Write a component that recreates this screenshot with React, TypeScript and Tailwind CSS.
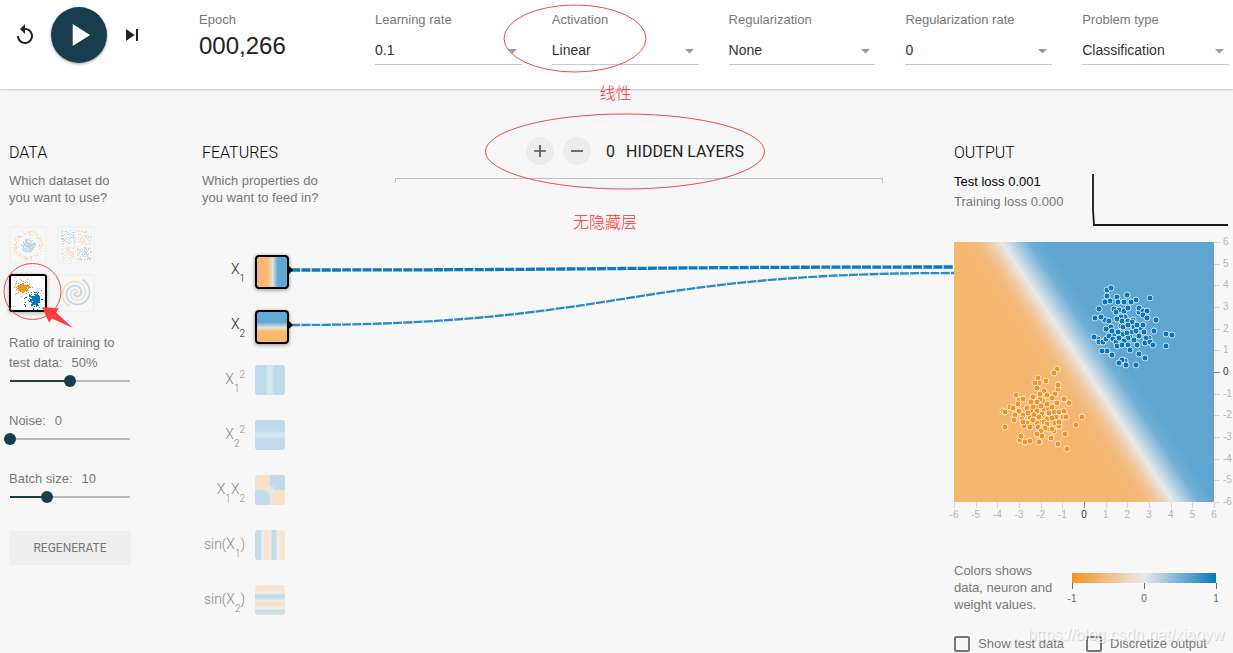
import { useState } from 'react';
import type { ReactNode } from 'react';

type Point = [number, number];

const BLUE = '#0877bd';
const ORANGE = '#f59322';

const bluePoints: Point[] = [
  [176, 95], [169, 92], [185, 94], [160, 92], [178, 90], [187, 86], [171, 75], [167, 84],
  [153, 48], [157, 46], [156, 59], [153, 54], [151, 60], [163, 55], [173, 53], [182, 58], [196, 56],
  [164, 60], [170, 60], [177, 60], [145, 67], [141, 76], [151, 78], [147, 75], [155, 79],
  [160, 67], [165, 68], [170, 69], [162, 70], [174, 66], [185, 70], [185, 66], [189, 69], [193, 69],
  [189, 73], [193, 76], [202, 78], [167, 75], [163, 77], [168, 79], [174, 79], [179, 78], [178, 80],
  [157, 85], [152, 87], [158, 89], [164, 90], [169, 85], [174, 83], [180, 85], [183, 83], [189, 83],
  [190, 90], [182, 89], [173, 91], [200, 89], [212, 92], [218, 93], [212, 104], [144, 97], [140, 95],
  [145, 100], [149, 100], [152, 97], [155, 94], [159, 97], [162, 100], [165, 96], [174, 96], [170, 99],
  [180, 98], [195, 96], [192, 96], [191, 101], [196, 100], [199, 103], [163, 104], [168, 103],
  [174, 103], [183, 103], [176, 108], [153, 109], [148, 109], [158, 113], [185, 112], [191, 116],
  [171, 119], [168, 118], [165, 121], [172, 123], [182, 123],
];

const orangePoints: Point[] = [
  [89, 159], [90, 167], [94, 166], [88, 172], [91, 176], [77, 169], [76, 175], [83, 165], [100, 170],
  [102, 175], [87, 180], [83, 181], [95, 187], [73, 181], [101, 181], [86, 157], [79, 165], [93, 177],
  [103, 127], [100, 131], [84, 136], [85, 141], [81, 141], [92, 139], [104, 147], [104, 143],
  [83, 146], [90, 149], [62, 153], [65, 158], [69, 157], [64, 162], [86, 152], [79, 155], [93, 153],
  [101, 152], [98, 156], [110, 157], [115, 161], [103, 161], [93, 162], [77, 160], [83, 160],
  [87, 164], [98, 165], [56, 165], [59, 166], [49, 169], [51, 170], [65, 169], [73, 166], [61, 173],
  [60, 178], [51, 185], [69, 173], [74, 171], [83, 169], [80, 173], [85, 175], [79, 178], [68, 177],
  [70, 184], [69, 180], [76, 185], [90, 180], [93, 182], [84, 185], [95, 171], [98, 176], [105, 170],
  [110, 169], [109, 175], [112, 175], [105, 184], [105, 180], [128, 175], [122, 183], [111, 192],
  [91, 186], [87, 189], [100, 189], [98, 187], [83, 192], [88, 194], [97, 196], [66, 198], [67, 194],
  [71, 200], [76, 199], [85, 200], [104, 202], [113, 207],
];

function makeRandom(seed: number) {
  let s = seed;
  return () => {
    s = (s * 16807) % 2147483647;
    return s / 2147483647;
  };
}

function Dots({ points, color, size = 1 }: { points: Point[]; color: string; size?: number }) {
  return (
    <g fill={color}>
      {points.map(([x, y], i) => (
        <rect key={i} x={x} y={y} width={size} height={size} />
      ))}
    </g>
  );
}

function blob(seed: number, n: number, cx: number, cy: number, spread: number): Point[] {
  const r = makeRandom(seed);
  return Array.from({ length: n }, () => [
    Math.round(cx + (r() + r() + r() - 1.5) * spread),
    Math.round(cy + (r() + r() + r() - 1.5) * spread),
  ]);
}

function ring(seed: number, n: number, r0: number, r1: number): Point[] {
  const r = makeRandom(seed);
  return Array.from({ length: n }, () => {
    const a = r() * Math.PI * 2;
    const d = r0 + r() * (r1 - r0);
    return [Math.round(17 + Math.cos(a) * d), Math.round(17 + Math.sin(a) * d)];
  });
}

function patch(seed: number, x: number, y: number): Point[] {
  const r = makeRandom(seed);
  return Array.from({ length: 80 }, () => [Math.round(x + r() * 14), Math.round(y + r() * 14)]);
}

function spiral(phase: number) {
  const pts: string[] = [];
  for (let i = 0; i <= 80; i++) {
    const t = i / 80;
    const a = t * Math.PI * 3.6 + phase;
    pts.push(`${(17 + Math.sin(a) * t * 15).toFixed(1)},${(17 + Math.cos(a) * t * 15).toFixed(1)}`);
  }
  return pts.join(' ');
}

const datasets: { name: string; art: ReactNode }[] = [
  {
    name: 'Circle',
    art: (
      <>
        <Dots points={ring(91, 190, 11, 15)} color={ORANGE} />
        <Dots points={ring(37, 230, 0, 7)} color={BLUE} />
      </>
    ),
  },
  {
    name: 'Exclusive or',
    art: (
      <>
        <Dots points={patch(11, 2, 2)} color={BLUE} />
        <Dots points={patch(23, 18, 2)} color={ORANGE} />
        <Dots points={patch(35, 2, 18)} color={ORANGE} />
        <Dots points={patch(47, 18, 18)} color={BLUE} />
      </>
    ),
  },
  {
    name: 'Gaussian',
    art: (
      <>
        <Dots points={blob(5005, 75, 11, 11, 8)} color={ORANGE} />
        <Dots points={blob(90210, 60, 11, 11, 4)} color={ORANGE} size={2} />
        <Dots points={blob(7177, 75, 23, 23, 8)} color={BLUE} />
        <Dots points={blob(31337, 60, 23, 23, 4)} color={BLUE} size={2} />
      </>
    ),
  },
  {
    name: 'Spiral',
    art: (
      <g fill="none" strokeWidth="1.6">
        <polyline points={spiral(0.8)} stroke={ORANGE} />
        <polyline points={spiral(0.8 + Math.PI)} stroke={BLUE} />
      </g>
    ),
  },
];

const selects = [
  { id: 'learning-rate', label: 'Learning rate', options: ['0.1', '0.03', '0.01'] },
  { id: 'activation', label: 'Activation', options: ['Linear', 'Tanh', 'ReLU', 'Sigmoid'] },
  { id: 'regularization', label: 'Regularization', options: ['None', 'L1', 'L2'] },
  { id: 'regularization-rate', label: 'Regularization rate', options: ['0', '0.001', '0.01'] },
  { id: 'problem-type', label: 'Problem type', options: ['Classification', 'Regression'] },
];

function SelectField({ id, label, options }: { id: string; label: string; options: string[] }) {
  return (
    <div className="relative min-w-0 flex-1">
      <label htmlFor={id} className="block text-[13px] leading-[17px] text-[#777]">{label}</label>
      <div className="relative mt-2">
        <select id={id} className="block h-[29px] w-full appearance-none rounded-none border-b border-[#c8c8c8] bg-transparent text-[14px] text-[#333] outline-none">
          {options.map((o) => <option key={o}>{o}</option>)}
        </select>
        <svg className="pointer-events-none absolute top-[13px] right-[5px]" width="9" height="5" viewBox="0 0 9 5" aria-hidden="true">
          <path d="M0 0h9L4.500 4.500z" fill="#999" />
        </svg>
      </div>
      {id === 'activation' && (
        <>
          <svg className="pointer-events-none absolute -top-[7px] -left-[49px] z-10" width="144" height="69" viewBox="0 0 144 69" fill="none" aria-hidden="true">
            <ellipse cx="72" cy="34.500" rx="71" ry="33.500" stroke="#f8474a" />
          </svg>
          <p className={`${noteText} top-[69px] left-12`}>线性</p>
        </>
      )}
    </div>
  );
}

const noteText = "pointer-events-none absolute z-10 whitespace-nowrap font-['Noto_Sans_CJK_SC',sans-serif] text-[16px] leading-[24px] font-light text-[#ff2b2b]";

const heading = "font-['Roboto',sans-serif] text-[16px] leading-[20px] font-light text-black";

function Slider({ id, label, suffix = '', min, max, initial, wrap = false }: {
  id: string; label: string; suffix?: string; min: number; max: number; initial: number; wrap?: boolean;
}) {
  const [value, setValue] = useState(initial);
  const fill = Math.round(((value - min) / (max - min)) * 120);
  return (
    <div className="mb-[23px]">
      <label htmlFor={id} className="block leading-[20px]">
        {wrap ? <>Ratio of training to<br />test data:</> : label}
        <span className="ml-[9px]">{value}{suffix}</span>
      </label>
      <input
        id={id}
        type="range"
        min={min}
        max={max}
        value={value}
        onChange={(e) => setValue(Number(e.target.value))}
        className="-ml-[5px] mt-px block h-[14px] w-[132px] appearance-none [&::-webkit-slider-thumb]:size-3 [&::-webkit-slider-thumb]:appearance-none [&::-webkit-slider-thumb]:rounded-full [&::-webkit-slider-thumb]:bg-[#183d4e]"
        style={{
          background: `linear-gradient(#183d4e,#183d4e) 6px center / ${fill}px 2px no-repeat, linear-gradient(#b8b8b8,#b8b8b8) 6px center / 120px 2px no-repeat`,
        }}
      />
    </div>
  );
}

const sub = 'relative top-[8px] text-[10px]';
const sup = 'relative -top-[6px] text-[10px]';

const features: { key: string; label: ReactNode; fill: string; active?: boolean }[] = [
  { key: 'x', active: true, label: <>X<span className={sub}>1</span></>, fill: 'bg-[linear-gradient(90deg,#f9b871_0%,#f9b871_38%,#e8e4dc_52%,#63a8d5_66%,#63a8d5_100%)]' },
  { key: 'y', active: true, label: <>X<span className={sub}>2</span></>, fill: 'bg-[linear-gradient(180deg,#63a8d5_0%,#63a8d5_36%,#e8e4dc_52%,#f9b871_62%,#f9b871_100%)]' },
  { key: 'xx', label: <>X<span className={sub}>1</span><span className={sup}>2</span></>, fill: 'bg-[linear-gradient(90deg,#bedaeb_36%,#d6e5f0_44%,#d6e5f0_56%,#bedaeb_64%)]' },
  { key: 'yy', label: <>X<span className={sub}>2</span><span className={sup}>2</span></>, fill: 'bg-[linear-gradient(180deg,#bedaeb_36%,#d6e5f0_44%,#d6e5f0_56%,#bedaeb_64%)]' },
  { key: 'xy', label: <>X<span className={sub}>1</span>X<span className={sub}>2</span></>, fill: 'bg-[radial-gradient(circle,#e4ebef_0%,#e4ebef99_14%,#e4ebef00_28%),conic-gradient(#bedaeb_25%,#f9e1c6_25%_50%,#bedaeb_50%_75%,#f9e1c6_75%)]' },
  { key: 'sinx', label: <>sin(X<span className={sub}>1</span>)</>, fill: 'bg-[linear-gradient(90deg,#bedaeb_0%,#c6deec_18%,#f2f0ee_25%,#f9e4d0_32%,#f9e4d0_44%,#eeedec_52%,#c3dcec_58%,#c3dcec_68%,#f2f0ee_77%,#f9e4d0_84%,#f9e4d0_100%)]' },
  { key: 'siny', label: <>sin(X<span className={sub}>2</span>)</>, fill: 'bg-[linear-gradient(180deg,#f9e4d0_0%,#f9e4d0_18%,#f2f0ee_26%,#bedaeb_34%,#c6deec_44%,#eeedec_52%,#f9e1ca_60%,#f9e4d0_70%,#f2f0ee_78%,#c6deec_85%,#cfe2ee_100%)]' },
];

const ticks = [-6, -5, -4, -3, -2, -1, 0, 1, 2, 3, 4, 5, 6];

function Heatmap() {
  return (
    <svg className="block w-full overflow-visible" height="285" viewBox="0 0 279 285" preserveAspectRatio="xMinYMin meet" role="img" aria-label="Output map">
      <defs>
        <linearGradient id="boundary" gradientUnits="userSpaceOnUse" x1="104" y1="149.3" x2="162.600" y2="110.700">
          <stop offset="0" stopColor="#f5b670" />
          <stop offset="0.2" stopColor="#f3ba7b" />
          <stop offset="0.35" stopColor="#efcba5" />
          <stop offset="0.5" stopColor="#e9e9e9" />
          <stop offset="0.65" stopColor="#afcfe2" />
          <stop offset="0.82" stopColor="#72afd5" />
          <stop offset="1" stopColor="#5fa6d3" />
        </linearGradient>
      </defs>
      <rect width="260" height="260" fill="url(#boundary)" />
      {[{ pts: orangePoints, c: ORANGE }, { pts: bluePoints, c: BLUE }].map(({ pts, c }) => (
        <g key={c} fill={c} stroke="#fff" strokeOpacity="0.75">
          {pts.map(([x, y], i) => <circle key={i} cx={x} cy={y} r="3" />)}
        </g>
      ))}
      <g className="font-['Liberation_Sans',sans-serif] text-[10px]">
        {ticks.map((t) => {
          const p = ((t + 6) / 12) * 260;
          const line = t === 0 ? '#888' : '#d5d5d5';
          const text = t === 0 ? '#333' : '#b5b5b5';
          return (
            <g key={t}>
              <path d={`M${Math.round(p) + 0.5} 260v6M260 ${Math.round(260 - p) + 0.5}h6`} stroke={line} />
              <text x={p} y="276" textAnchor="middle" fill={text}>{t}</text>
              <text x="269" y={263 - p} fill={text}>{t}</text>
            </g>
          );
        })}
      </g>
    </svg>
  );
}

function CheckBox({ id, label }: { id: string; label: string }) {
  return (
    <div className="flex items-center gap-2">
      <input id={id} type="checkbox" className="size-4 appearance-none rounded-[2px] border-2 border-[#777] checked:bg-[#183d4e]" />
      <label htmlFor={id} className="whitespace-nowrap">{label}</label>
    </div>
  );
}

export default function App() {
  const [dataset, setDataset] = useState('Gaussian');
  return (
    <div className="min-h-screen bg-[#f7f7f7] font-['Liberation_Sans',Arial,sans-serif] text-[13px] leading-[17px] text-[#777]">
      <header className="flex h-[89px] items-start bg-white pr-1 shadow-[0_1px_2px_rgba(0,0,0,0.2)]">
        <div className="flex w-[199px] shrink-0 items-center pt-[7px] pl-[13px]">
          <button type="button" aria-label="Reset" className="text-[#222]">
            <svg width="24" height="24" viewBox="0 0 24 24" fill="currentColor" className="block">
              <path d="M12 5V1L7 6l5 5V7c3.310 0 6 2.690 6 6s-2.690 6-6 6-6-2.690-6-6H4c0 4.420 3.580 8 8 8s8-3.580 8-8-3.580-8-8-8z" />
            </svg>
          </button>
          <button type="button" aria-label="Run" className="ml-[14px] flex size-14 items-center justify-center rounded-full bg-[#183d4e] text-white shadow-[0_1px_3px_rgba(0,0,0,0.4)]">
            <svg width="38" height="38" viewBox="0 0 24 24" fill="currentColor" className="block">
              <path d="M8 5v14l11-7z" />
            </svg>
          </button>
          <button type="button" aria-label="Step" className="ml-[13px] text-[#222]">
            <svg width="24" height="24" viewBox="0 0 24 24" fill="currentColor" className="block">
              <path d="M6 18l8.500-6L6 6v12zM16 6v12h2V6h-2z" />
            </svg>
          </button>
        </div>
        <div className="w-[176px] shrink-0 pt-[11px]">
          <p>Epoch</p>
          <p className="mt-1 text-[24px] leading-[28px] text-[#222]">000,266</p>
        </div>
        <div className="flex min-w-0 flex-1 gap-[30px] pt-[11px]">
          {selects.map((s) => <SelectField key={s.id} {...s} />)}
        </div>
      </header>

      <main className="flex items-start pt-[54px] pl-[9px]">
        <section className="w-[122px] shrink-0">
          <h2 className={heading}>DATA</h2>
          <p className="mt-[9px]">Which dataset do<br />you want to use?</p>
          <div className="relative mt-5 mb-[21px] grid w-[86px] grid-cols-2 gap-[10px]">
            {datasets.map((d) => {
              const on = dataset === d.name;
              return (
                <button
                  key={d.name}
                  type="button"
                  aria-label={d.name}
                  aria-pressed={on}
                  onClick={() => setDataset(d.name)}
                  className={on
                    ? 'size-[38px] rounded-[3px] border-2 border-black bg-white shadow-[0_1px_4px_rgba(0,0,0,0.3)]'
                    : 'size-[38px] rounded-[3px] border-2 border-[#f2f2f2]'}
                >
                  <svg width="34" height="34" viewBox="0 0 34 34" className={on ? 'block' : 'block opacity-25'} aria-hidden="true">{d.art}</svg>
                </button>
              );
            })}
            <svg className="pointer-events-none absolute top-[36px] -left-[6px] z-10" width="80" height="70" viewBox="0 0 80 70" fill="none" aria-hidden="true">
              <ellipse cx="29.500" cy="29.500" rx="28.500" ry="28" stroke="#f8474a" />
              <path d="M39 45L56 46.500L53 50.500L70 66L49 56.500L46 60.500Z" fill="#ff3b3b" />
            </svg>
          </div>
          <Slider id="ratio" label="Ratio of training to test data:" wrap suffix="%" min={0} max={100} initial={50} />
          <Slider id="noise" label="Noise:" min={0} max={50} initial={0} />
          <Slider id="batch" label="Batch size:" min={1} max={30} initial={10} />
          <button type="button" className="mt-1 h-[34px] w-full rounded-[3px] bg-[#eee] font-['Roboto',sans-serif] text-[12px] text-[#777]">REGENERATE</button>
        </section>

        <section className="ml-[71px] min-w-0 flex-1">
          <div className="flex items-start">
            <div className="w-[193px] shrink-0">
              <h2 className={heading}>FEATURES</h2>
              <p className="mt-[9px]">Which properties do<br />you want to feed in?</p>
            </div>
            <div className="relative mr-[71px] min-w-0 flex-1">
              <div className="-mt-[6px] flex h-7 items-center justify-center pr-2">
                <button type="button" aria-label="Add layer" className="flex size-7 items-center justify-center rounded-full bg-[#ececec]">
                  <svg width="14" height="14" viewBox="0 0 14 14" stroke="#555" strokeWidth="1.700" aria-hidden="true"><path d="M1 7h12M7 1v12" /></svg>
                </button>
                <button type="button" aria-label="Remove layer" className="ml-[9px] flex size-7 items-center justify-center rounded-full bg-[#ececec]">
                  <svg width="14" height="14" viewBox="0 0 14 14" stroke="#555" strokeWidth="1.700" aria-hidden="true"><path d="M1 7h12" /></svg>
                </button>
                <span className="ml-[15px] font-['Roboto',sans-serif] text-[16px] text-[#222]">0</span>
                <h2 className="ml-[11px] font-['Roboto',sans-serif] text-[16px] whitespace-nowrap text-[#222]">HIDDEN LAYERS</h2>
              </div>
              <div className="mt-[13px] h-[5px] border-x border-t border-[#c0c0c0]" />
              <svg className="pointer-events-none absolute -top-[30px] left-1/2 z-10 -ml-[155px]" width="282" height="77" viewBox="0 0 282 77" fill="none" aria-hidden="true">
                <ellipse cx="141" cy="38.500" rx="139.500" ry="37.500" stroke="#f8474a" />
              </svg>
              <p className={`${noteText} top-[66px] left-1/2 -ml-[66px]`}>无隐藏层</p>
            </div>
          </div>
          <div className="mt-[49px] flex items-start">
            <ul className="w-[87px] shrink-0">
              {features.map((f) => (
                <li key={f.key} className="flex h-[55px] items-start gap-[10px]">
                  <span className={f.active
                    ? "w-[43px] shrink-0 text-right font-['Roboto',sans-serif] text-[14px] leading-[28px] font-light whitespace-nowrap text-[#222]"
                    : "w-[43px] shrink-0 text-right font-['Roboto',sans-serif] text-[14px] leading-[28px] font-light whitespace-nowrap text-[#888]"}
                  >
                    {f.label}
                  </span>
                  <span className={f.active
                    ? `block size-[34px] shrink-0 rounded-[4px] border-2 border-black bg-origin-border shadow-[0_1px_4px_rgba(0,0,0,0.4)] ${f.fill}`
                    : `block size-[30px] shrink-0 rounded-[3px] ${f.fill}`}
                  />
                </li>
              ))}
            </ul>
            <svg className="block h-[100px] min-w-0 flex-1" viewBox="0 0 665 100" preserveAspectRatio="none" fill="none" aria-hidden="true">
              <path d="M2 15C333 15 333 12 665 12" stroke="#0f78be" strokeWidth="3.300" strokeDasharray="9 1.200" vectorEffect="non-scaling-stroke" />
              <path d="M2 70C333 70 333 18 665 18" stroke="#2c8ac6" strokeWidth="2.300" strokeDasharray="9 1.200" vectorEffect="non-scaling-stroke" />
              <path d="M0 11l4 4-4 4zM0 66l4 4-4 4z" fill="#000" />
            </svg>
          </div>
        </section>

        <section className="relative w-[279px] shrink-0">
          <h2 className={heading}>OUTPUT</h2>
          <div className="mt-[9px] flex h-[70px] items-start justify-between pr-[5px]">
            <div className="leading-[20px] whitespace-nowrap">
              <p className="text-black">Test loss 0.001</p>
              <p>Training loss 0.000</p>
            </div>
            <svg className="mt-0.5 block" width="136" height="53" viewBox="0 0 136 53" fill="none" aria-hidden="true">
              <path d="M1 0V36L2 51H136" stroke="#1a1a1a" strokeWidth="1.800" />
            </svg>
          </div>
          <Heatmap />
          <div className="mt-[35px] flex items-start">
            <p className="w-[112px] shrink-0">Colors shows<br />data, neuron and<br />weight values.</p>
            <svg className="mt-[11px] block" width="160" height="36" viewBox="0 0 160 36" role="img" aria-label="Color scale from -1 to 1">
              <defs>
                <linearGradient id="scale">
                  <stop offset="0" stopColor="#f59322" />
                  <stop offset="0.5" stopColor="#e8eaeb" />
                  <stop offset="1" stopColor="#0877bd" />
                </linearGradient>
              </defs>
              <rect x="6" width="144" height="10" fill="url(#scale)" />
              <path d="M6.500 10v6M78.500 10v6M150.500 10v6" stroke="#666" />
              <g className="font-['Liberation_Sans',sans-serif] text-[10px]" fill="#666" textAnchor="middle">
                <text x="6" y="29">-1</text>
                <text x="78" y="29">0</text>
                <text x="150" y="29">1</text>
              </g>
            </svg>
          </div>
          <div className="mt-[22px] flex items-center gap-[22px]">
            <CheckBox id="show-test" label="Show test data" />
            <CheckBox id="discretize" label="Discretize output" />
          </div>
          <p className="pointer-events-none absolute right-[9px] bottom-[7px] text-[16px] leading-[20px] whitespace-nowrap text-white/80 [text-shadow:1px_1px_1px_rgba(0,0,0,0.18)]">https://blog.csdn.net/xiaoyw</p>
        </section>
      </main>
    </div>
  );
}
